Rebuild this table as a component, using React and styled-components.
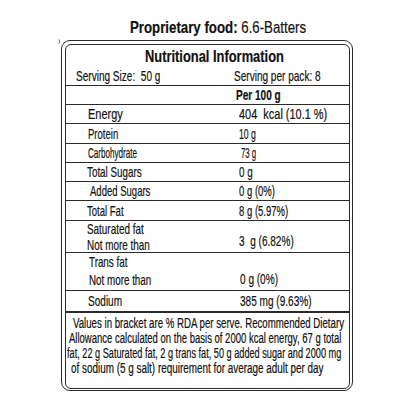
import React from 'react';
import styled, { createGlobalStyle } from 'styled-components';

const rows = [
  { label: 'Per 100 g', h: 19, value: 'Per 100 g', header: true },
  { label: 'Energy', value: '404  kcal (10.1 %)', h: 19, sx: 0.73 },
  { label: 'Protein', value: '10 g', h: 20, vsx: 0.58 },
  { label: 'Carbohydrate', value: '73 g', h: 19, sx: 0.54, vsx: 0.52, vdx: 2 },
  { label: 'Total Sugars', value: '0 g', h: 19, sx: 0.655, dx: -1 },
  { label: 'Added Sugars', value: '0 g (0%)', h: 19, dx: 2 },
  { label: 'Total Fat', value: '8 g (5.97%)', h: 20, dx: -1 },
  { label: ['Saturated fat', 'Not more than'], value: '3  g (6.82%)', h: 32, lh: 16, sx: 0.66, vsx: 0.67, dx: -1, vpt: 12 },
  { label: ['Trans fat', 'Not more than'], value: '0 g (0%)', h: 38, lh: 17.5, sx: 0.655, vsx: 0.67, dx: 1, vpt: 17, vdx: 1 },
  { label: 'Sodium', value: '385 mg (9.63%)', h: 22, sx: 0.67, thick: true, vdx: 1 },
];

const footnote = [
  { text: 'Values in bracket are % RDA per serve. Recommended Dietary', indent: 7.5, sx: 0.69 },
  { text: 'Allowance calculated on the basis of 2000 kcal energy, 67 g total', indent: 3.5, sx: 0.68 },
  { text: 'fat, 22 g Saturated fat, 2 g trans fat, 50 g added sugar and 2000 mg', indent: 1.5, sx: 0.655 },
  { text: 'of sodium (5 g salt) requirement for average adult per day', indent: 5.5, sx: 0.707 },
];

const ROW_SX = 0.635;

const App = () => (
  <>
    <GlobalStyle />
    <Page>
      <Title>
        <Txt $sx={0.78}>
          <b>Proprietary food:</b> 6.6-Batters
        </Txt>
      </Title>
      <Label>
        <Inner>
          <Header>
            <Heading>
              <Txt $sx={0.758}>Nutritional Information</Txt>
            </Heading>
            <Serving>
              <Txt $sx={0.67}>Serving Size:  50 g</Txt>
              <Txt $sx={0.67}>Serving per pack: 8</Txt>
            </Serving>
          </Header>
          {rows.map((row, i) => (
            <Row key={i} $h={row.h} $lh={row.lh} $thick={row.thick}>
              <LabelCell $dx={row.dx} $multi={Array.isArray(row.label)}>
                {row.header
                  ? null
                  : [].concat(row.label).map((line) => (
                      <Line key={line}>
                        <Txt $sx={row.sx || ROW_SX}>{line}</Txt>
                      </Line>
                    ))}
              </LabelCell>
              <ValueCell $pt={row.vpt} $dx={row.header ? -3 : row.vdx}>
                <Txt
                  $sx={row.header ? 0.67 : row.vsx || row.sx || ROW_SX}
                  $bold={row.header}
                >
                  {row.value}
                </Txt>
              </ValueCell>
            </Row>
          ))}
          <Foot>
            {footnote.map((line) => (
              <FootLine key={line.text} $indent={line.indent}>
                <Txt $sx={line.sx}>{line.text}</Txt>
              </FootLine>
            ))}
          </Foot>
        </Inner>
      </Label>
    </Page>
  </>
);

const GlobalStyle = createGlobalStyle`
  html, body {
    margin: 0;
    padding: 0;
    background: #fff;
    overflow: hidden;
  }
  body {
    font-family: "Liberation Sans", Arial, sans-serif;
    color: #111;
    -webkit-text-stroke: 0.2px #111;
  }
`;

const Page = styled.div`
  width: 416px;
  height: 416px;
  box-sizing: border-box;
  padding: 18px 0 0 61px;
`;

const Txt = styled.span`
  display: inline-block;
  white-space: pre;
  transform: scaleX(${(p) => p.$sx});
  transform-origin: left center;
  font-weight: ${(p) => (p.$bold ? 700 : 'inherit')};
`;

const Title = styled.h1`
  margin: 0 0 2px;
  padding-left: 69px;
  font-size: 17px;
  line-height: 20px;
  font-weight: 400;
  color: #111;

  b {
    font-weight: 700;
  }
`;

const Label = styled.div`
  position: relative;
  width: 292px;
  box-sizing: border-box;
  border: 1.5px solid #2a2a2a;
  border-radius: 9px;
  padding: 3px 2.5px 1.5px;

  &::before {
    content: '';
    position: absolute;
    left: -6px;
    top: -2px;
    width: 3px;
    height: 5px;
    border-right: 1px solid #666;
    border-radius: 0 60% 60% 0;
  }
`;

const Inner = styled.div`
  border: 1.5px solid #2a2a2a;
  border-radius: 6px;
  overflow: hidden;
`;

const Header = styled.div`
  height: 41px;
  box-sizing: border-box;
  border-bottom: 1px solid #2a2a2a;
  padding-top: 3px;
`;

const Heading = styled.div`
  padding-left: 79.5px;
  font-size: 17px;
  line-height: 18px;
  font-weight: 700;
`;

const Serving = styled.div`
  display: grid;
  grid-template-columns: 158px 1fr;
  margin-top: 1px;
  padding-left: 10px;
  font-size: 15px;
  line-height: 17px;
`;

const Row = styled.div`
  display: grid;
  grid-template-columns: 173px 1fr;
  align-items: center;
  height: ${(p) => p.$h}px;
  box-sizing: border-box;
  border-bottom: ${(p) => (p.$thick ? 2 : 1)}px solid #2a2a2a;
  font-size: 15px;
  line-height: ${(p) => p.$lh || 16}px;
`;

const LabelCell = styled.div`
  align-self: ${(p) => (p.$multi ? 'start' : 'center')};
  padding-left: ${(p) => 22 + (p.$dx || 0)}px;
`;

const Line = styled.div``;

const ValueCell = styled.div`
  align-self: ${(p) => (p.$pt ? 'start' : 'center')};
  padding-top: ${(p) => p.$pt || 0}px;
  margin-left: ${(p) => p.$dx || 0}px;
`;

const Foot = styled.div`
  height: 74.5px;
  box-sizing: border-box;
  padding-top: 2.6px;
  font-size: 14px;
  line-height: 15px;
`;

const FootLine = styled.div`
  padding-left: ${(p) => p.$indent}px;
`;

export default App;
